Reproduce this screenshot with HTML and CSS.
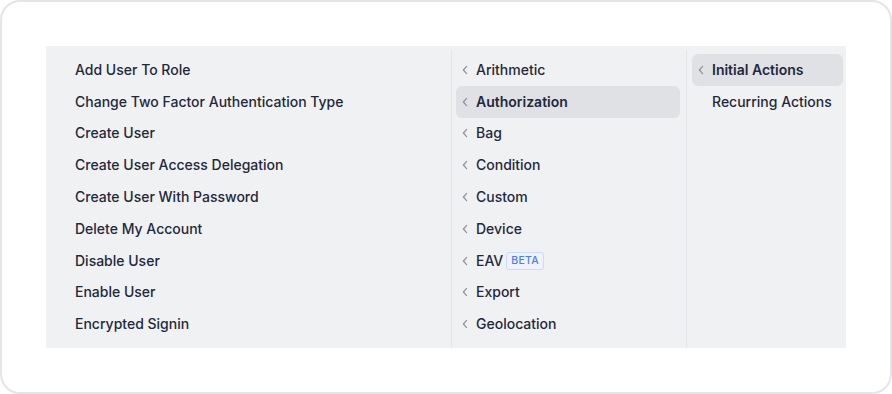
FILE: index.html
```html
<!DOCTYPE html>
<html>
<head>
<meta charset="utf-8">
<link rel="stylesheet" href="styles.css">
</head>
<body>
<div class="card">
  <div class="panel">
    <div class="col col-left">
      <div class="item">Add User To Role</div>
      <div class="item">Change Two Factor Authentication Type</div>
      <div class="item">Create User</div>
      <div class="item">Create User Access Delegation</div>
      <div class="item">Create User With Password</div>
      <div class="item">Delete My Account</div>
      <div class="item">Disable User</div>
      <div class="item">Enable User</div>
      <div class="item">Encrypted Signin</div>
    </div>
    <div class="col col-mid">
      <div class="item nav"><svg class="chev" viewBox="0 0 6 10"><path d="M4.6 1.4 L1.4 5 L4.6 8.6"/></svg><span>Arithmetic</span></div>
      <div class="item nav active"><svg class="chev" viewBox="0 0 6 10"><path d="M4.6 1.4 L1.4 5 L4.6 8.6"/></svg><span>Authorization</span></div>
      <div class="item nav"><svg class="chev" viewBox="0 0 6 10"><path d="M4.6 1.4 L1.4 5 L4.6 8.6"/></svg><span>Bag</span></div>
      <div class="item nav"><svg class="chev" viewBox="0 0 6 10"><path d="M4.6 1.4 L1.4 5 L4.6 8.6"/></svg><span>Condition</span></div>
      <div class="item nav"><svg class="chev" viewBox="0 0 6 10"><path d="M4.6 1.4 L1.4 5 L4.6 8.6"/></svg><span>Custom</span></div>
      <div class="item nav"><svg class="chev" viewBox="0 0 6 10"><path d="M4.6 1.4 L1.4 5 L4.6 8.6"/></svg><span>Device</span></div>
      <div class="item nav"><svg class="chev" viewBox="0 0 6 10"><path d="M4.6 1.4 L1.4 5 L4.6 8.6"/></svg><span>EAV</span><span class="badge">BETA</span></div>
      <div class="item nav"><svg class="chev" viewBox="0 0 6 10"><path d="M4.6 1.4 L1.4 5 L4.6 8.6"/></svg><span>Export</span></div>
      <div class="item nav"><svg class="chev" viewBox="0 0 6 10"><path d="M4.6 1.4 L1.4 5 L4.6 8.6"/></svg><span>Geolocation</span></div>
    </div>
    <div class="col col-right">
      <div class="item nav active"><svg class="chev" viewBox="0 0 6 10"><path d="M4.6 1.4 L1.4 5 L4.6 8.6"/></svg><span>Initial Actions</span></div>
      <div class="item nav nochev"><span>Recurring Actions</span></div>
    </div>
  </div>
</div>
</body>
</html>
```

FILE: styles.css
```css
* { box-sizing: border-box; }
html, body { margin: 0; padding: 0; background: #ffffff; }
body {
  font-family: Inter, "Noto Sans", sans-serif;
  font-size: 14px;
  color: #1e293b;
}
.card {
  width: 892px;
  height: 394px;
  border: 2px solid #e3e5e8;
  border-radius: 20px;
  padding: 44px;
  background: #fff;
}
.panel {
  display: flex;
  height: 302px;
  background: #f0f1f3;
  padding-top: 4px;
}
.col {
  display: flex;
  flex-direction: column;
  padding-top: 4px;
}
.col-left {
  width: 405px;
  padding-left: 29px;
}
.col-mid {
  width: 235px;
  border-left: 1px solid #e3e5e8;
  padding-left: 4px;
  padding-right: 6px;
}
.col-right {
  width: 160px;
  border-left: 1px solid #e3e5e8;
  padding-left: 5px;
  padding-right: 3px;
}
.item {
  height: 31.8px;
  flex: none;
  display: flex;
  align-items: center;
  font-weight: 500;
  line-height: 20px;
  white-space: nowrap;
}
.nav {
  padding-left: 6px;
  border-radius: 6px;
}
.nav.active {
  background: #e0e1e5;
  font-weight: 600;
}
.nochev { padding-left: 20px; }
.chev {
  width: 6px;
  height: 10px;
  margin-right: 8px;
  fill: none;
  stroke: #8c9199;
  stroke-width: 1.2;
  stroke-linecap: round;
  stroke-linejoin: round;
}
.badge {
  margin-left: 3px;
  height: 18px;
  padding: 0 4px;
  display: inline-flex;
  align-items: center;
  font-size: 10.5px;
  font-weight: 500;
  letter-spacing: 0.3px;
  color: #4d7cf4;
  background: #eef3ff;
  border: 1px solid #cbd9fd;
  border-radius: 3px;
}
```
